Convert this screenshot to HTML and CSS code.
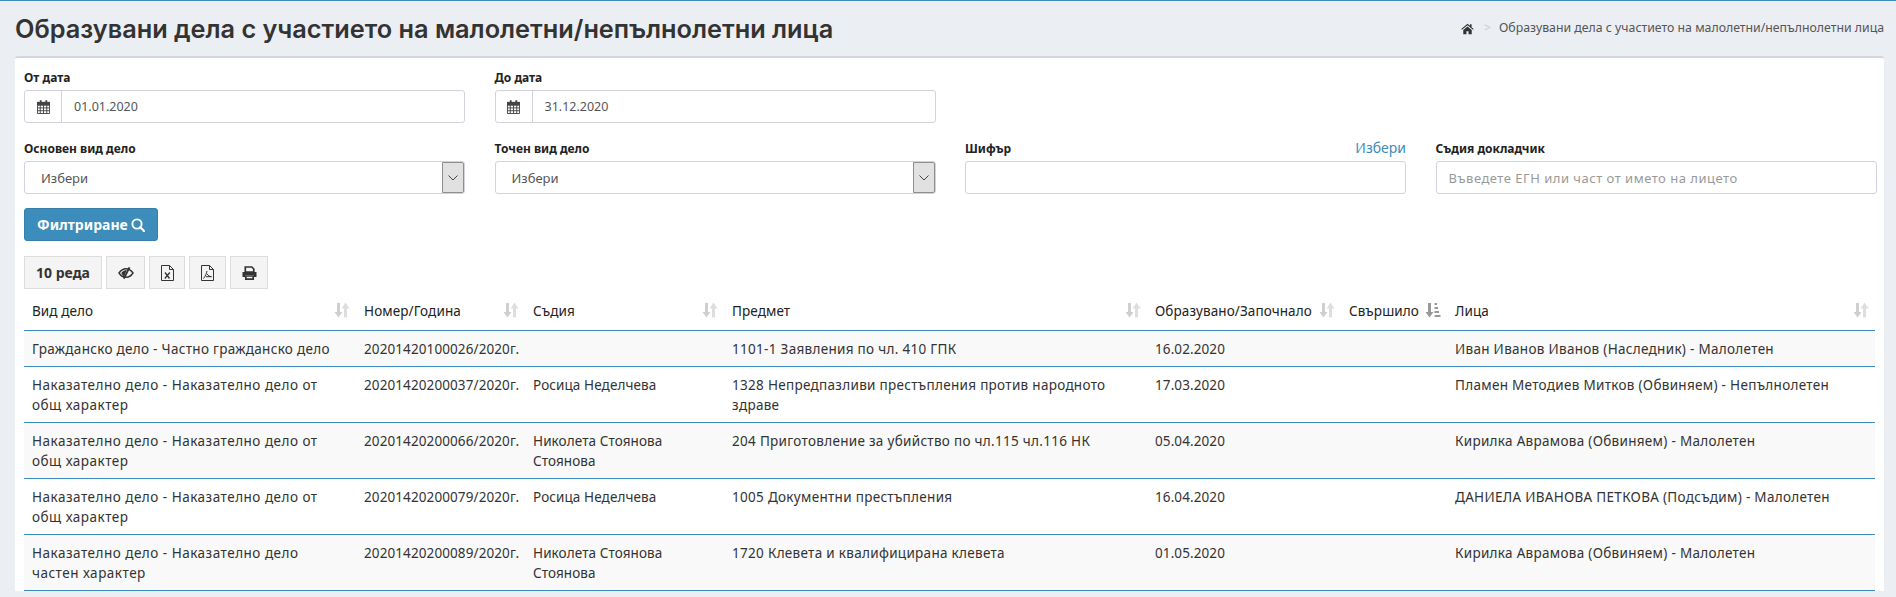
FILE: index.html
```html
<!DOCTYPE html>
<html lang="bg">
<head>
    <meta charset="utf-8">
    <title>Образувани дела с участието на малолетни/непълнолетни лица</title>
    <link rel="stylesheet" href="styles.css">
</head>
<body>
    <svg class="defs" width="0" height="0">
        <symbol id="i-sort" viewBox="0 0 16 16">
            <path d="M3 1h3v9h2.500L4.500 15.500 .5 10H3z" fill="#cfcfcf"/>
            <path d="M10 6.500h3v9h-3zM11.500 .5l4 6h-8z" fill="#dedede"/>
        </symbol>
        <symbol id="i-cal" viewBox="0 0 14 15">
            <path d="M.5 2.500h13v12H.5z M.5 5.500h13 M.5 8.500h13 M.5 11.500h13 M3.500 5.500v9 M7 5.500v9 M10.500 5.500v9" fill="none" stroke="#444"/>
            <path d="M0 2h14v3.500H0zM3 .2h2v3H3zM9 .2h2v3H9z" fill="#444"/>
        </symbol>
    </svg>

    <header class="page-head">
        <h1>Образувани дела с участието на малолетни/непълнолетни лица</h1>
        <nav class="crumbs">
            <svg class="ico-home" viewBox="0 0 16 14"><path d="M8 .5 .3 7l.9 1L8 2.300 14.800 8l.9-1-2.700-2.300V1h-2v2z M2.800 8.300V13.500h3.900V9.800h2.600v3.700h3.900V8.300L8 4z" fill="#333"/></svg>
            <span class="sep">&gt;</span>
            <span>Образувани дела с участието на малолетни/непълнолетни лица</span>
        </nav>
    </header>

    <main class="card">
        <form class="filters">
            <div class="field">
                <label>От дата</label>
                <div class="input-group">
                    <span class="addon"><svg class="ico-cal"><use href="#i-cal"/></svg></span>
                    <input type="text" value="01.01.2020">
                </div>
            </div>
            <div class="field">
                <label>До дата</label>
                <div class="input-group">
                    <span class="addon"><svg class="ico-cal"><use href="#i-cal"/></svg></span>
                    <input type="text" value="31.12.2020">
                </div>
            </div>
            <div class="field"></div>
            <div class="field"></div>

            <div class="field">
                <label>Основен вид дело</label>
                <div class="select-box">
                    <select><option>Избери</option></select>
                    <span class="select-arrow"><svg viewBox="0 0 10 6" width="10" height="6"><path d="M.5.500 5 5 9.500.500" fill="none" stroke="#444"/></svg></span>
                </div>
            </div>
            <div class="field">
                <label>Точен вид дело</label>
                <div class="select-box">
                    <select><option>Избери</option></select>
                    <span class="select-arrow"><svg viewBox="0 0 10 6" width="10" height="6"><path d="M.5.500 5 5 9.500.500" fill="none" stroke="#444"/></svg></span>
                </div>
            </div>
            <div class="field">
                <div class="label-row">
                    <label>Шифър</label>
                    <a class="pick" href="#">Избери</a>
                </div>
                <input class="plain" type="text">
            </div>
            <div class="field">
                <label>Съдия докладчик</label>
                <input class="plain" type="text" placeholder="Въведете ЕГН или част от името на лицето">
            </div>
        </form>

        <button class="btn-filter" type="button">Филтриране
            <svg viewBox="0 0 14 14" width="14" height="14"><circle cx="6" cy="6" r="4.600" fill="none" stroke="#fff" stroke-width="1.900"/><path d="m9.300 9.300 3.700 3.700" stroke="#fff" stroke-width="2.200" stroke-linecap="round"/></svg>
        </button>

        <div class="toolbar">
            <button class="tool tool-rows" type="button">10 реда</button>
            <button class="tool tool-eye" type="button">
                <svg viewBox="0 0 16 12" width="16" height="12"><path d="M1 6c2-3 4.500-4.300 7-4.300S13 3 15 6c-2 3-4.500 4.300-7 4.300S3 9 1 6z" fill="none" stroke="#333" stroke-width="1.400"/><path d="M3.200 6C5 4 6.500 3 8.800 3L6 9.500C5 9 4.300 7.500 3.200 6z" fill="#333"/><path d="M11.500.3 5.800 11.700" stroke="#333" stroke-width="1.800"/></svg>
            </button>
            <button class="tool tool-xls" type="button">
                <svg viewBox="0 0 13 16" width="13" height="16"><path d="M.5.500h8l4 4v11H.5zM8.500.500v4h4" fill="none" stroke="#333"/><path d="m4 7.500 4.500 6M8.800 7.500l-5 6" stroke="#333" stroke-width="1.300"/></svg>
            </button>
            <button class="tool tool-pdf" type="button">
                <svg viewBox="0 0 13 16" width="13" height="16"><path d="M.5.500h8l4 4v11H.5zM8.500.500v4h4" fill="none" stroke="#333"/><path d="M6 6c-.5 2.500-1.500 5-3.500 7.500M6 9c1 1.500 2.500 2.500 4.500 2.700H5" fill="none" stroke="#333"/></svg>
            </button>
            <button class="tool tool-print" type="button">
                <svg viewBox="0 0 15 14" width="15" height="14"><path d="M3.300 1h6.500l2 2v3H3.300z" fill="none" stroke="#333" stroke-width="1.700"/><path d="M.5 6h14v5h-2.500V9H3v2H.5z" fill="#333"/><path d="M3.800 10h7.400v3.200H3.800z" fill="none" stroke="#333" stroke-width="1.700"/></svg>
            </button>
        </div>

        <table class="cases">
            <colgroup>
                <col class="c-type"><col class="c-num"><col class="c-judge"><col class="c-subj"><col class="c-start"><col class="c-end"><col class="c-people">
            </colgroup>
            <thead>
                <tr>
                    <th>Вид дело<svg class="sort"><use href="#i-sort"/></svg></th>
                    <th>Номер/Година<svg class="sort"><use href="#i-sort"/></svg></th>
                    <th>Съдия<svg class="sort"><use href="#i-sort"/></svg></th>
                    <th>Предмет<svg class="sort"><use href="#i-sort"/></svg></th>
                    <th>Образувано/Започнало<svg class="sort"><use href="#i-sort"/></svg></th>
                    <th>Свършило<svg class="sort" viewBox="0 0 16 16"><path d="M3 1h3v9h2.500L4.500 15.500 .5 10H3z" fill="#999"/><path d="M9.500 1h2.500v2H9.500zM9.500 5h3.500v2H9.500zM9.500 9h4.500v2H9.500zM9.500 13h6v2h-6z" fill="#999"/></svg></th>
                    <th>Лица<svg class="sort"><use href="#i-sort"/></svg></th>
                </tr>
            </thead>
            <tbody>
                <tr>
                    <td>Гражданско дело - Частно гражданско дело</td>
                    <td>20201420100026/2020г.</td>
                    <td></td>
                    <td>1101-1 Заявления по чл. 410 ГПК</td>
                    <td>16.02.2020</td>
                    <td></td>
                    <td>Иван Иванов Иванов (Наследник) - Малолетен</td>
                </tr>
                <tr>
                    <td>Наказателно дело - Наказателно дело от<br>общ характер</td>
                    <td>20201420200037/2020г.</td>
                    <td>Росица Неделчева</td>
                    <td>1328 Непредпазливи престъпления против народното<br>здраве</td>
                    <td>17.03.2020</td>
                    <td></td>
                    <td>Пламен Методиев Митков (Обвиняем) - Непълнолетен</td>
                </tr>
                <tr>
                    <td>Наказателно дело - Наказателно дело от<br>общ характер</td>
                    <td>20201420200066/2020г.</td>
                    <td>Николета Стоянова<br>Стоянова</td>
                    <td>204 Приготовление за убийство по чл.115 чл.116 НК</td>
                    <td>05.04.2020</td>
                    <td></td>
                    <td>Кирилка Аврамова (Обвиняем) - Малолетен</td>
                </tr>
                <tr>
                    <td>Наказателно дело - Наказателно дело от<br>общ характер</td>
                    <td>20201420200079/2020г.</td>
                    <td>Росица Неделчева</td>
                    <td>1005 Документни престъпления</td>
                    <td>16.04.2020</td>
                    <td></td>
                    <td>ДАНИЕЛА ИВАНОВА ПЕТКОВА (Подсъдим) - Малолетен</td>
                </tr>
                <tr>
                    <td>Наказателно дело - Наказателно дело<br>частен характер</td>
                    <td>20201420200089/2020г.</td>
                    <td>Николета Стоянова<br>Стоянова</td>
                    <td>1720 Клевета и квалифицирана клевета</td>
                    <td>01.05.2020</td>
                    <td></td>
                    <td>Кирилка Аврамова (Обвиняем) - Малолетен</td>
                </tr>
            </tbody>
        </table>
    </main>
</body>
</html>
```

FILE: styles.css
```css
html {
    height: 597px;
    overflow: hidden;
}

body {
    margin: 0;
    background-color: #ebeef3;
    border-top: 1px solid #3c8dbc;
    color: #333;
    font-family: "Noto Sans", "Open Sans", sans-serif;
    font-size: 13px;
    line-height: 1.5;
}

.defs {
    position: absolute;
}

.page-head {
    display: flex;
    align-items: center;
    justify-content: space-between;
    height: 55px;
    padding: 0 12px 0 15px;
}

.page-head h1 {
    margin: 0;
    font-family: "Inter", "Open Sans", sans-serif;
    font-size: 25.300px;
    font-weight: 600;
    color: #333;
}

.crumbs {
    display: flex;
    align-items: center;
    font-size: 12.300px;
    color: #555;
}

.ico-home {
    width: 13px;
    height: 12px;
}

.sep {
    margin: 0 8px 0 10px;
    color: #ccc;
}

.card {
    margin: 0 12px 0 15px;
    padding: 11px 9px 0;
    background-color: #fff;
    border-top: 2px solid #d2d6de;
    border-radius: 3px 3px 0 0;
}

.filters {
    display: grid;
    grid-template-columns: repeat(4, 441px);
    column-gap: 29.500px;
    row-gap: 17px;
}

.field label {
    display: block;
    height: 19px;
    margin-bottom: 2px;
    font-weight: 700;
    font-size: 12px;
    color: #222;
}

.label-row {
    display: flex;
    justify-content: space-between;
}

.pick {
    height: 19px;
    font-size: 14px;
    line-height: 15px;
    color: #3c8dbc;
    text-decoration: none;
}

.input-group,
.select-box {
    display: flex;
    height: 33px;
    box-sizing: border-box;
    border: 1px solid #d2d2de;
    border-radius: 3px;
}

.addon {
    display: flex;
    align-items: center;
    justify-content: center;
    width: 36px;
    border-right: 1px solid #d2d2de;
}

.ico-cal {
    width: 13px;
    height: 14px;
}

input,
select {
    font-family: inherit;
    font-size: 13px;
    color: #555;
    outline: none;
}

.input-group input {
    flex: 1;
    min-width: 0;
    padding: 0 12px;
    border: 0;
    background: transparent;
    font-size: 12.500px;
}

input.plain {
    display: block;
    width: 100%;
    height: 33px;
    box-sizing: border-box;
    padding: 0 12px;
    border: 1px solid #d2d2de;
    border-radius: 3px;
}

input::placeholder {
    color: #999;
    opacity: 1;
    letter-spacing: .5px;
}

.select-box select {
    flex: 1;
    min-width: 0;
    padding: 0 16px;
    border: 0;
    background: transparent;
    appearance: none;
}

.select-arrow {
    display: flex;
    align-items: center;
    justify-content: center;
    width: 20px;
    background-color: #e1e1e1;
    border: 1px solid #8f8f8f;
    border-radius: 0 2px 2px 0;
}

.btn-filter {
    display: flex;
    align-items: center;
    gap: 3px;
    height: 33px;
    margin-top: 14px;
    padding: 0 12px;
    background-color: #3c8dbc;
    border: 1px solid #367fa9;
    border-radius: 3px;
    color: #fff;
    font-family: inherit;
    font-size: 14px;
    font-weight: 700;
}

.toolbar {
    display: flex;
    gap: 4px;
    margin-top: 15px;
}

.tool {
    display: flex;
    align-items: center;
    justify-content: center;
    height: 33px;
    padding: 0;
    background-color: #f4f4f4;
    border: 1px solid #ddd;
    color: #333;
    font-family: inherit;
    font-size: 14px;
    font-weight: 700;
}

.tool-rows { width: 78px; }
.tool-eye { width: 39px; }
.tool-xls { width: 36px; }
.tool-pdf { width: 37px; }
.tool-print { width: 38px; }

.cases {
    width: 1851px;
    border-collapse: collapse;
    table-layout: fixed;
    font-size: 13.500px;
    letter-spacing: .1px;
}

.c-type { width: 332px; }
.c-num { width: 169px; }
.c-judge { width: 199px; }
.c-subj { width: 423px; }
.c-start { width: 194px; }
.c-end { width: 106px; }
.c-people { width: 428px; }

.cases th {
    position: relative;
    height: 41px;
    box-sizing: border-box;
    padding: 3px 8px 0;
    border-bottom: 1px solid #3c8dbc;
    font-weight: 400;
    text-align: left;
    color: #222;
}

.sort {
    position: absolute;
    right: 6px;
    top: 13px;
    width: 16px;
    height: 16px;
}

.cases td {
    padding: 9px 8px 7px;
    border-bottom: 1px solid #3c8dbc;
    vertical-align: top;
    line-height: 19.500px;
    color: #333;
}

.cases td:first-child {
    letter-spacing: .5px;
    white-space: nowrap;
}

.cases tbody tr:first-child td:first-child {
    letter-spacing: .3px;
}

.cases td:nth-child(4),
.cases td:nth-child(7) {
    letter-spacing: .3px;
}

.cases tbody tr:nth-child(odd) td {
    background-color: #f9f9f9;
}
```
